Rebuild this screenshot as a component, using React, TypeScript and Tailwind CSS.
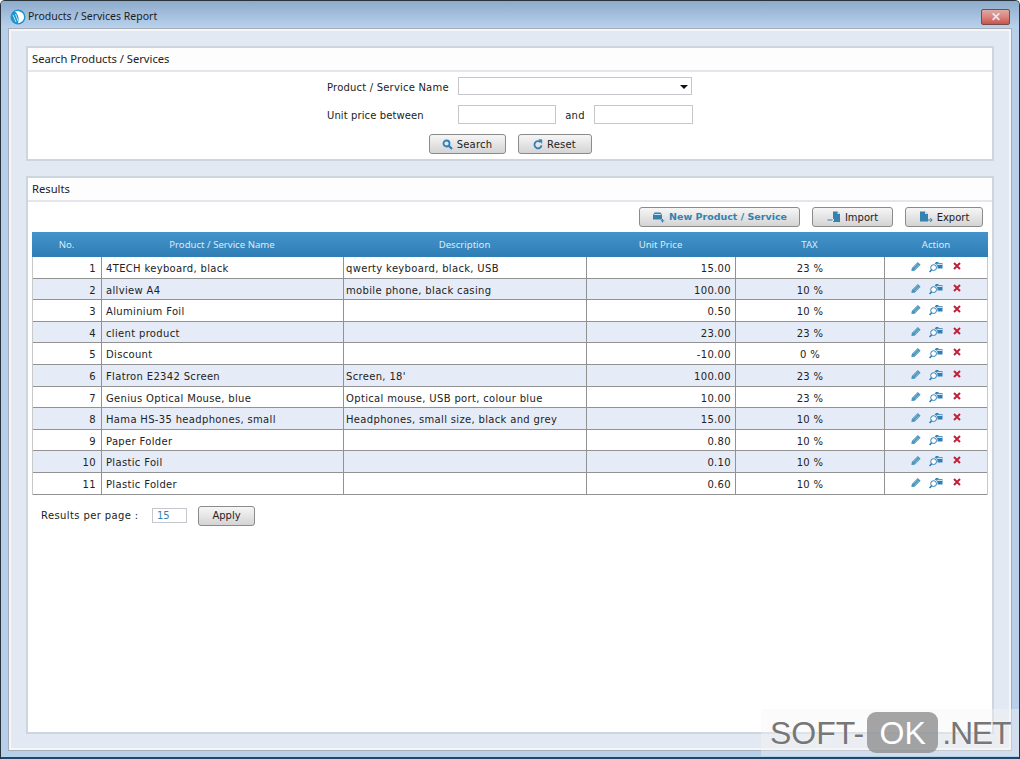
import type { ReactNode } from "react";

const ROWS = [
  ["1", "4TECH keyboard, black", "qwerty keyboard, black, USB", "15.00", "23 %"],
  ["2", "allview A4", "mobile phone, black casing", "100.00", "10 %"],
  ["3", "Aluminium Foil", "", "0.50", "10 %"],
  ["4", "client product", "", "23.00", "23 %"],
  ["5", "Discount", "", "-10.00", "0 %"],
  ["6", "Flatron E2342 Screen", "Screen, 18'", "100.00", "23 %"],
  ["7", "Genius Optical Mouse, blue", "Optical mouse, USB port, colour blue", "10.00", "23 %"],
  ["8", "Hama HS-35 headphones, small", "Headphones, small size, black and grey", "15.00", "10 %"],
  ["9", "Paper Folder", "", "0.80", "10 %"],
  ["10", "Plastic Foil", "", "0.10", "10 %"],
  ["11", "Plastic Folder", "", "0.60", "10 %"],
];

function SearchIcon() {
  return (
    <svg width="11" height="11" viewBox="0 0 11 11" fill="none" stroke="#2f7fb5">
      <circle cx="4.5" cy="4.5" r="3" strokeWidth="1.8" />
      <path d="M6.8 6.8 10 10" strokeWidth="2.2" />
    </svg>
  );
}

function ResetIcon() {
  return (
    <svg width="10" height="11" viewBox="0 0 10 11" fill="none" stroke="#2f7fb5">
      <path d="M7.6 3.2A3.6 3.6 0 1 0 8.6 6.4" strokeWidth="1.8" />
      <path d="M5.8 0.6 9 0.8 8.8 4.4Z" fill="#2f7fb5" strokeWidth="0.5" />
    </svg>
  );
}

function BoxPlusIcon() {
  return (
    <svg width="13" height="12" viewBox="0 0 13 12">
      <path d="M1 4 2.5 1.5h6L10 4v4.5H1Z" fill="#3482b0" />
      <path d="M2.5 3h6l.6 1H1.9Z" fill="#d3e5f0" />
      <path d="M10.5 8v3.5M8.8 9.8h3.5" stroke="#3482b0" strokeWidth="1" />
    </svg>
  );
}

function ImportIcon() {
  return (
    <svg width="14" height="12" viewBox="0 0 14 12">
      <path d="M6 0.5h4.5L13 3v8H6Z" fill="#3482b0" />
      <path d="M10.5 0.5V3H13Z" fill="#d3e5f0" />
      <path d="M0.5 9h6" stroke="#3482b0" strokeWidth="1" />
      <path d="M4.8 7l2 2-2 2" stroke="#ffffff" strokeWidth="1" fill="none" />
    </svg>
  );
}

function ExportIcon() {
  return (
    <svg width="14" height="12" viewBox="0 0 14 12">
      <path d="M1 0.5h5L9 3v7.5H1Z" fill="#3482b0" />
      <path d="M6 0.5V3h3Z" fill="#d3e5f0" />
      <path d="M8 9h5M11.2 7l2 2-2 2" stroke="#3482b0" strokeWidth="1" fill="none" />
    </svg>
  );
}

function PencilIcon() {
  return (
    <svg width="10" height="11" viewBox="0 0 10 10">
      <path d="M6.8.4 9.6 3.2 3.6 9.2.4 9.6.8 6.4Z" fill="#4b94bd" />
      <path d="M2.4 6.2 6.8 2M3.8 7.6 8 3.4" stroke="#a8cfe3" strokeWidth=".6" />
    </svg>
  );
}

function ViewIcon() {
  return (
    <svg width="14" height="12" viewBox="0 0 14 12" fill="none">
      <path d="M7 1h2l1 1h3.5v5.5H8.5C8.8 5 8 3 5.6 2.8Z" fill="#2f7fb5" />
      <path d="M7.5 2.8h6v1.2H8.4Z" fill="#cfe3ef" />
      <circle cx="4.6" cy="6.6" r="2.9" fill="#ffffff" stroke="#2f7fb5" strokeWidth="1" />
      <path d="M2.6 8.8 .6 11" stroke="#2f7fb5" strokeWidth="1.7" />
    </svg>
  );
}

function CrossIcon() {
  return (
    <svg width="8" height="8" viewBox="0 0 8 8" stroke="#c0213a" strokeWidth="2">
      <path d="M1 1 7 7M7 1 1 7" />
    </svg>
  );
}

function LogoIcon() {
  return (
    <svg width="16" height="16" viewBox="0 0 16 16">
      <circle cx="8" cy="8" r="7.5" fill="#1f95cf" />
      <path d="M5 2.2C10 1.5 14 4 14 8c0 3.6-3 6-6 6C9.5 10 8.5 5.5 5 2.2Z" fill="#ffffff" />
      <path d="M3 6 6 13M5.5 5 8 12" stroke="#bfe6f7" strokeWidth="1" />
    </svg>
  );
}

function Btn({ icon, children, className, blue }: { icon?: ReactNode; children: ReactNode; className: string; blue?: boolean }) {
  return (
    <button
      className={`flex h-[20px] items-center justify-center gap-[4px] rounded-[3px] border border-[#8b8b8b] bg-gradient-to-b from-[#f6f6f6] to-[#d4d4d4] ${
        blue ? "text-[9.5px] font-bold text-[#3482b0]" : "text-[10px] text-[#222222]"
      } ${className}`}
    >
      {icon}
      <span>{children}</span>
    </button>
  );
}

function Panel({ title, className, children }: { title: string; className: string; children: ReactNode }) {
  return (
    <section className={`border-2 border-[#ccd6df] bg-white ${className}`}>
      <h2 className="h-[24px] border-b-2 border-[#e3e6ea] bg-[#fdfdfd] pl-[4px] font-['Noto_Sans'] text-[11.2px] leading-[22px] text-[#222222]">
        {title}
      </h2>
      {children}
    </section>
  );
}

export default function App() {
  return (
    <div className="relative flex h-[759px] w-[1020px] flex-col overflow-hidden rounded-t-[5px] border-x border-t border-x-[#28333c] border-t-[#28333c] bg-[#b7cfe9] font-['DejaVu_Sans'] text-[10px] text-[#222222]">
      {/* Title bar */}
      <header className="flex h-[27px] shrink-0 items-center bg-gradient-to-b from-[#8eabcb] to-[#b9d3ee] pl-[9px] pr-[9px] pt-[5px]">
        <LogoIcon />
        <span className="ml-[2px] font-['Noto_Sans'] text-[10.5px] text-[#1c1c1c]">Products / Services Report</span>
        <div className="ml-auto flex h-[16px] w-[29px] items-center justify-center rounded-[2px] border border-[#7d4a4a] bg-gradient-to-b from-[#dfa8a2] via-[#d8847c] to-[#c8544e]">
          <span className="font-['Liberation_Sans'] text-[12px] font-bold leading-none text-[#e8e8e8]">✕</span>
        </div>
      </header>

      {/* Window body */}
      <main className="mx-[7px] flex h-[723px] shrink-0 flex-col gap-[15px] border border-[#a4adb8] bg-[#e3e9f2] px-[17px] pt-[17px] shadow-[inset_0_0_0_2px_#f5f6f9]">
        <Panel title="Search Products / Services" className="h-[115px]">
          <div className="flex justify-center pt-[5px]">
            <div className="flex w-[366px] flex-col tracking-[0.2px]">
              <div className="flex h-[18px] items-center">
                <label className="w-[131px] pt-[2px]">Product / Service Name</label>
                <div className="relative h-[18px] w-[234px] border border-[#c4c8cc] bg-white">
                  <span className="absolute right-[3px] top-[7px] h-0 w-0 border-x-[4px] border-t-[4px] border-x-transparent border-t-[#111111]" />
                </div>
              </div>
              <div className="mt-[10px] flex h-[18px] items-center">
                <label className="w-[131px] pt-[2px] tracking-[0.1px]">Unit price between</label>
                <input className="h-[19px] w-[98px] border border-[#c4c8cc] bg-white" />
                <span className="w-[38px] pt-[2px] text-center">and</span>
                <input className="h-[19px] w-[99px] border border-[#c4c8cc] bg-white" />
              </div>
              <div className="mt-[11px] flex justify-center gap-[12px]">
                <Btn icon={<SearchIcon />} className="w-[77px]">Search</Btn>
                <Btn icon={<ResetIcon />} className="w-[74px]">Reset</Btn>
              </div>
            </div>
          </div>
        </Panel>

        <Panel title="Results" className="h-[558px]">
          <div className="flex justify-end pr-[9px] pt-[5px]">
            <Btn blue icon={<BoxPlusIcon />} className="w-[161px]">New Product / Service</Btn>
            <Btn icon={<ImportIcon />} className="ml-[12px] w-[81px]">Import</Btn>
            <Btn icon={<ExportIcon />} className="ml-[12px] w-[78px]">Export</Btn>
          </div>

          <div className="mx-[4px] mt-[5px] w-[956px]">
            <div className="grid h-[25px] grid-cols-[69px_242px_243px_149px_149px_104px] items-center bg-gradient-to-b from-[#4394cb] to-[#2f7db5] pt-[2px] text-center font-['Noto_Sans'] text-[9.6px] text-[#dcebf5]">
              <span>No.</span>
              <span>Product / Service Name</span>
              <span>Description</span>
              <span>Unit Price</span>
              <span>TAX</span>
              <span>Action</span>
            </div>
            <div className="border-x border-[#c8c8c8] tracking-[0.33px]">
              {ROWS.map((row, i) => (
                <div
                  key={row[0]}
                  className={`grid h-[21.6px] grid-cols-[69px_242px_243px_149px_149px_102px] overflow-hidden border-b border-[#929292] ${i % 2 ? "bg-[#e6ecf7]" : "bg-white"}`}
                >
                  <span className="border-r border-[#929292] pr-[5px] text-right leading-[23px]">{row[0]}</span>
                  <span className="border-r border-[#929292] pl-[4px] leading-[23px]">{row[1]}</span>
                  <span className="border-r border-[#929292] pl-[2px] leading-[23px]">{row[2]}</span>
                  <span className="border-r border-[#929292] pr-[4px] text-right leading-[23px]">{row[3]}</span>
                  <span className="border-r border-[#929292] text-center leading-[23px]">{row[4]}</span>
                  <span className="flex items-start pl-[26px] pt-[4px]">
                    <PencilIcon />
                    <span className="ml-[8px]"><ViewIcon /></span>
                    <span className="ml-[10px] mt-[1px]"><CrossIcon /></span>
                  </span>
                </div>
              ))}
            </div>
          </div>

          <div className="mt-[11px] flex items-center pl-[13px]">
            <span className="w-[111px] tracking-[0.39px]">Results per page :</span>
            <input
              readOnly
              value="15"
              className="h-[15px] w-[35px] border border-[#c4c8cc] bg-white pl-[4px] text-[10px] text-[#3482b0]"
            />
            <Btn className="ml-[11px] w-[57px]">Apply</Btn>
          </div>
        </Panel>
      </main>

      {/* Bottom edge of the frame */}
      <div className="absolute inset-x-0 bottom-0 h-[2px] bg-[#1c4a66]" />

      {/* Watermark */}
      <div className="absolute bottom-[3px] right-0 flex h-[47px] w-[258px] items-center bg-[#f4f4f4]/40 pl-[9px] font-['Liberation_Sans'] text-[32px] leading-none text-[#777777] [text-shadow:0_0_2px_#ffffff]">
        <span>SOFT-</span>
        <span className="ml-[3px] flex h-[41px] w-[71px] items-center justify-center rounded-[9px] bg-[#8f8f8f]/80 text-white [text-shadow:none]">OK</span>
        <span className="ml-[4px] tracking-[-1.2px]">.NET</span>
      </div>
    </div>
  );
}
